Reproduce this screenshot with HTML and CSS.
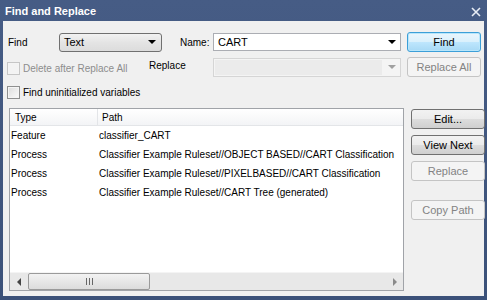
FILE: index.html
```html
<!DOCTYPE html>
<html lang="en">
<head>
  <meta charset="UTF-8" />
  <title>Find and Replace</title>
  <link rel="stylesheet" href="styles.css">
</head>
<body>
  <div class="window">
    <div class="titlebar">
      <span class="title">Find and Replace</span>
      <svg class="close" width="10" height="10" viewBox="0 0 10 10">
        <path d="M1 1 L9 9 M9 1 L1 9" stroke="#e8edf5" stroke-width="1.6" fill="none"/>
      </svg>
    </div>

    <div class="content">
      <div class="row row-find">
        <span class="lbl lbl-find">Find</span>
        <div class="select">
          <span>Text</span>
          <span class="arrow"></span>
        </div>
        <span class="lbl lbl-name">Name:</span>
        <div class="combo">
          <span>CART</span>
          <span class="arrow"></span>
        </div>
        <button class="btn btn-default">Find</button>
      </div>

      <div class="row row-replace">
        <label class="check-group disabled">
          <span class="checkbox"></span>
          <span>Delete after Replace All</span>
        </label>
        <span class="lbl lbl-replace">Replace</span>
        <div class="combo combo-disabled">
          <span></span>
          <span class="arrow"></span>
        </div>
        <button class="btn" disabled>Replace All</button>
      </div>

      <div class="row row-check">
        <label class="check-group">
          <span class="checkbox"></span>
          <span>Find uninitialized variables</span>
        </label>
      </div>

      <div class="results">
        <div class="list">
          <div class="list-head">
            <span class="col-type">Type</span>
            <span class="col-path">Path</span>
          </div>
          <div class="list-rows">
            <div class="list-row"><span class="col-type">Feature</span><span class="col-path">classifier_CART</span></div>
            <div class="list-row"><span class="col-type">Process</span><span class="col-path">Classifier Example Ruleset//OBJECT BASED//CART Classification</span></div>
            <div class="list-row"><span class="col-type">Process</span><span class="col-path">Classifier Example Ruleset//PIXELBASED//CART Classification</span></div>
            <div class="list-row"><span class="col-type">Process</span><span class="col-path">Classifier Example Ruleset//CART Tree (generated)</span></div>
          </div>
          <div class="hscroll">
            <span class="sb-btn"><span class="tri tri-left"></span></span>
            <div class="sb-track">
              <div class="sb-thumb"><span class="grip"></span></div>
            </div>
            <span class="sb-btn"><span class="tri tri-right"></span></span>
          </div>
        </div>

        <div class="side-buttons">
          <button class="btn">Edit...</button>
          <button class="btn">View Next</button>
          <button class="btn" disabled>Replace</button>
          <button class="btn btn-copy" disabled>Copy Path</button>
        </div>
      </div>
    </div>
  </div>
</body>
</html>
```

FILE: styles.css
```css
body {
  margin: 0;
  font-family: 'Liberation Sans', Arial, sans-serif;
  font-size: 10px;
  color: #000;
  background-color: #3a5079;
}

.window {
  width: 487px;
  height: 300px;
  display: flex;
  flex-direction: column;
  background: linear-gradient(#465c85, #3b5179);
  padding: 0 3px 4px 3px;
  box-sizing: border-box;
}

.titlebar {
  height: 21px;
  display: flex;
  align-items: center;
  justify-content: space-between;
  padding: 0 3px 0 2px;
  flex-shrink: 0;
}

.title {
  color: white;
  font-weight: bold;
  font-size: 11px;
}

.close {
  margin-top: 3px;
}

.content {
  flex: 1;
  background-color: #f0f0f0;
  padding: 11px 1px 5px 4px;
  display: flex;
  flex-direction: column;
}

.row {
  display: flex;
  align-items: center;
  padding-right: 2px;
  white-space: nowrap;
}

.row > * {
  flex-shrink: 0;
}

.row-find {
  height: 20px;
}

.row-replace {
  height: 20px;
  margin-top: 5px;
}

.row-check {
  height: 16px;
  margin-top: 7px;
}

.lbl-find {
  width: 51px;
  padding-left: 1px;
}

.lbl-name {
  width: 33px;
  margin-left: 18px;
}

.lbl-replace {
  width: 64px;
  margin-top: -3px;
}

.select {
  width: 103px;
  height: 19px;
  box-sizing: border-box;
  border: 1px solid #707070;
  border-radius: 3px;
  background: linear-gradient(#f2f2f2, #e4e4e4 50%, #dcdcdc);
  display: flex;
  align-items: center;
  justify-content: space-between;
  padding: 0 5px 0 4px;
  font-size: 11px;
}

.combo {
  width: 188px;
  height: 18px;
  box-sizing: border-box;
  border: 1px solid #abadb3;
  background-color: white;
  display: flex;
  align-items: center;
  justify-content: space-between;
  padding: 0 4px 0 4px;
  font-size: 11px;
}

.combo-disabled {
  background-color: #f4f4f4;
  border-color: #d5d5d5;
  height: 19px;
}

.combo-disabled span:first-child {
  flex: 1;
  height: 15px;
  background-color: #ebebeb;
  margin: 0 6px 0 -3px;
}

.combo-disabled .arrow {
  border-top-color: #a0a0a0;
}

.arrow {
  width: 0;
  height: 0;
  border-left: 4px solid transparent;
  border-right: 4px solid transparent;
  border-top: 4px solid #000;
}

.btn {
  font-family: 'Liberation Sans', Arial, sans-serif;
  font-size: 11px;
  color: #000;
  width: 74px;
  height: 20px;
  margin-left: 6px;
  padding: 0;
  border: 1px solid #707070;
  border-radius: 3px;
  background: linear-gradient(#f2f2f2, #ebebeb 50%, #dddddd 51%, #cfcfcf);
}

.btn:disabled {
  color: #838383;
  border-color: #c4c4c4;
  background: #f4f4f4;
}

.btn-default {
  border-color: #3c9fd8;
  background: linear-gradient(#eaf6fd, #d9f0fc 50%, #bee6fd 51%, #a7d9f5);
  box-shadow: inset 0 0 0 1px #b8e6fb;
}

.check-group {
  display: flex;
  align-items: center;
  gap: 3px;
  width: 142px;
}

.check-group.disabled {
  color: #8d8d8d;
}

.checkbox {
  width: 13px;
  height: 13px;
  flex-shrink: 0;
  box-sizing: border-box;
  border: 1px solid #8e8f8f;
  background: linear-gradient(135deg, #dcdcdc, #fbfbfb);
  box-shadow: inset 0 0 0 1px #f4f4f4;
}

.check-group.disabled .checkbox {
  border-color: #c6c6c6;
  background: #f3f3f3;
  margin-top: 3px;
}

.check-group.disabled span:last-child {
  margin-top: 3px;
}

.results {
  flex: 1;
  display: flex;
  gap: 7px;
  margin-top: 8px;
}

.list {
  width: 393px;
  flex-shrink: 0;
  margin-left: 2px;
  border: 1px solid #a0a3a8;
  background-color: white;
  display: flex;
  flex-direction: column;
  overflow: hidden;
}

.list-head {
  height: 17px;
  flex-shrink: 0;
  display: flex;
  align-items: center;
  background: linear-gradient(#ffffff, #f3f4f6);
  border-bottom: 1px solid #e3e5e8;
  box-sizing: border-box;
}

.list-head .col-type {
  width: 88px;
  flex-shrink: 0;
  padding-left: 5px;
  border-right: 1px solid #e3e5e8;
  height: 17px;
  line-height: 17px;
  box-sizing: border-box;
}

.list-head .col-path {
  padding-left: 4px;
}

.list-rows {
  flex: 1;
}

.list-row {
  height: 19px;
  display: flex;
  align-items: center;
}

.list-row .col-type {
  width: 89px;
  flex-shrink: 0;
  padding-left: 1px;
  box-sizing: border-box;
}

.list-row .col-path {
  white-space: nowrap;
}

.hscroll {
  height: 17px;
  flex-shrink: 0;
  display: flex;
  background-color: #e8e8e8;
  border-top: 1px solid #f4f4f4;
}

.sb-btn {
  width: 17px;
  display: flex;
  align-items: center;
  justify-content: center;
}

.tri {
  width: 0;
  height: 0;
  border-top: 4px solid transparent;
  border-bottom: 4px solid transparent;
}

.tri-left {
  border-right: 4px solid #444;
}

.tri-right {
  border-left: 4px solid #8a8a8a;
}

.sb-track {
  flex: 1;
  display: flex;
  align-items: stretch;
  padding: 0 0 0 1px;
}

.sb-thumb {
  width: 122px;
  box-sizing: border-box;
  border: 1px solid #9a9a9a;
  border-radius: 2px;
  background: linear-gradient(#f2f2f2, #dcdcdc);
  display: flex;
  align-items: center;
  justify-content: center;
}

.grip {
  width: 7px;
  height: 7px;
  background: repeating-linear-gradient(90deg, #666 0 1px, transparent 1px 3px);
}

.side-buttons {
  display: flex;
  flex-direction: column;
  padding-top: 1px;
}

.side-buttons .btn {
  margin-left: 0;
  margin-bottom: 6px;
}

.side-buttons .btn-copy {
  margin-top: 13px;
}
```
